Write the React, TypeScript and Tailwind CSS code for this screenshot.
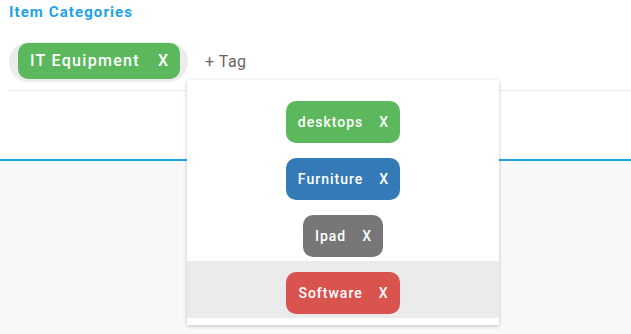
import { useState } from "react";

type Tag = { label: string; color: string };

const options: Tag[] = [
  { label: "desktops", color: "bg-[#5cb85c]" },
  { label: "Furniture", color: "bg-[#337ab7]" },
  { label: "Ipad", color: "bg-[#777777]" },
  { label: "Software", color: "bg-[#d9534f]" },
];

function Chip({ tag, big }: { tag: Tag; big?: boolean }) {
  return (
    <span
      className={`inline-flex items-center text-white font-medium ${tag.color} ${
        big
          ? "h-[36px] rounded-[10px] pl-[12px] pr-[11px] text-[16px] tracking-[1.3px] gap-[18px]"
          : "h-[42px] rounded-[10px] pl-[12px] pr-[11px] text-[14px] tracking-[1px] gap-[16px]"
      }`}
    >
      <span>{tag.label}</span>
      <span>X</span>
    </span>
  );
}

export default function App() {
  const [hovered, setHovered] = useState(3);

  return (
    <div
      className="relative w-[631px] h-[334px] overflow-hidden bg-[#f7f8fa]"
      style={{ fontFamily: "Roboto, 'Liberation Sans', sans-serif" }}
    >
      <div className="h-[161px] bg-white border-b-2 border-[#1fa2e0]">
        <div className="pl-[9px] pt-[2px] text-[15px] leading-[20px] font-bold tracking-[1.1px] text-[#1ca3e6]">
          Item Categories
        </div>
        <div className="ml-[9px] mt-[20px] flex items-center border-b border-[#ececec] pb-[8px]">
          <div className="flex items-start h-[40px] w-[179px] rounded-full bg-[#ececec] pl-[9px] pt-[1px]">
            <Chip tag={{ label: "IT Equipment", color: "bg-[#5cb85c]" }} big />
          </div>
          <span className="ml-[17px] text-[16px] tracking-[0.5px] text-[#666]">+ Tag</span>
        </div>
      </div>

      <div className="absolute left-[187px] top-[80px] w-[312px] bg-white pt-[10px] pb-[7px] shadow-[0_1px_4px_rgba(0,0,0,0.22)]">
        {options.map((o, i) => (
          <div
            key={o.label}
            onMouseEnter={() => setHovered(i)}
            className={`flex justify-center h-[57px] pt-[11px] ${i === hovered ? "bg-[#ebebeb]" : ""}`}
          >
            <Chip tag={o} />
          </div>
        ))}
      </div>
    </div>
  );
}
